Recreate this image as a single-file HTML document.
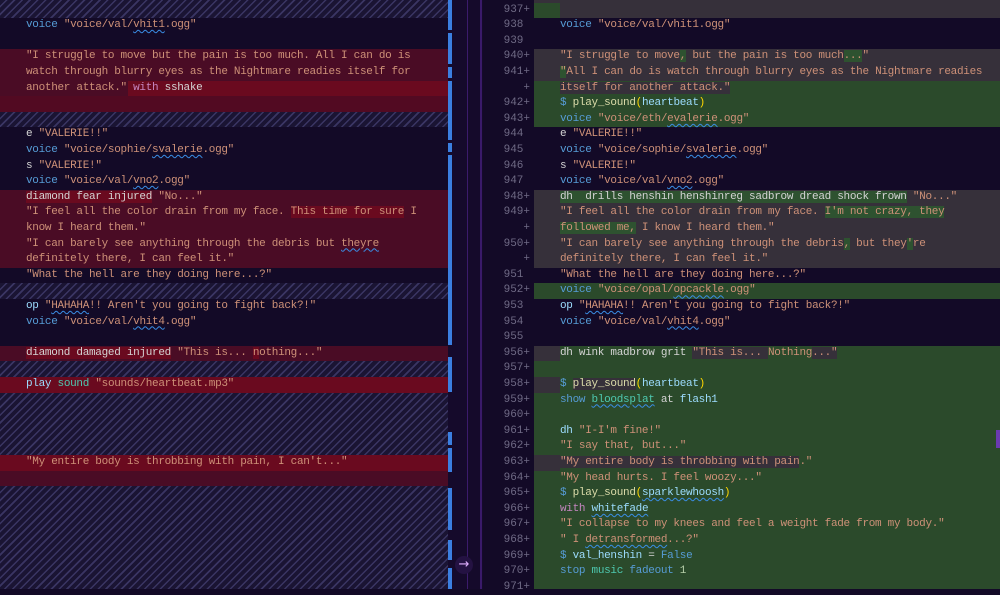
<!DOCTYPE html>
<html><head><meta charset="utf-8"><style>
*{margin:0;padding:0;box-sizing:border-box}
body{width:1000px;height:589px;overflow:hidden;background:#130a27;font-family:"Liberation Mono",monospace;font-size:11px;letter-spacing:-0.3px;position:relative}
.r{position:absolute;height:15.6px;line-height:15.6px;white-space:pre;color:#ce9178}
.L{left:0;width:448px}
.R{left:534px;width:466px}
.t{position:absolute;left:26px;top:0}
.R .t{left:26px}
.h{position:absolute;left:0;width:448px;background:#1a1433 repeating-linear-gradient(135deg,#1a1433 0 4px,#3a3563 4px 5.5px)}
.red{background:#4a0c25}
.red2{background:#6a0a1f}
.g{background:#2b4a2b}
.m{background:#36303a}
.gs{background:#2e5230}
.k{color:#569cd6}.w{color:#d4d4d4}.p{color:#c586c0}.y{color:#dcdcaa}.b{color:#ffd700}.c{color:#9cdcfe}.tq{color:#4ec9b0}.n{color:#b5cea8}
.u{text-decoration:underline wavy #3a8ee6;text-decoration-thickness:1px;text-underline-offset:2px}
.ln{position:absolute;left:483px;width:51px;height:15.6px;line-height:15.6px;text-align:right;color:#6f6a85;padding-right:4px;white-space:pre;letter-spacing:0}
.gap{position:absolute;left:448px;width:4px;height:3px;background:#150a2b}
</style></head><body>
<div class="h" style="top:0;height:18.2px"></div>
<div class="h" style="top:111.8px;height:15.6px"></div>
<div class="h" style="top:283.4px;height:15.6px"></div>
<div class="h" style="top:361.4px;height:15.6px"></div>
<div class="h" style="top:392.6px;height:62.4px"></div>
<div class="h" style="top:486.2px;height:103px"></div>
<div class="r L" style="top:18.2px"><span class="t"><span class="k">voice</span> "voice/val/<span class="u">vhit1</span>.ogg"</span></div>
<div class="r L red" style="top:49.4px"><span class="t">"I struggle to move but the pain is too much. All I can do is</span></div>
<div class="r L red" style="top:65px"><span class="t">watch through blurry eyes as the Nightmare readies itself for</span></div>
<div class="r L red" style="top:80.6px"><div style="position:absolute;left:128px;right:0;top:0;bottom:0" class="red2"></div><span class="t">another attack." <span class="p">with</span> <span class="w">sshake</span></span></div>
<div class="r L red2" style="top:96.2px;background:#520a22"></div>
<div class="r L" style="top:127.4px"><span class="t"><span class="w">e</span> "VALERIE!!"</span></div>
<div class="r L" style="top:143px"><span class="t"><span class="k">voice</span> "voice/sophie/<span class="u">svalerie</span>.ogg"</span></div>
<div class="r L" style="top:158.6px"><span class="t"><span class="w">s</span> "VALERIE!"</span></div>
<div class="r L" style="top:174.2px"><span class="t"><span class="k">voice</span> "voice/val/<span class="u">vno2</span>.ogg"</span></div>
<div class="r L red" style="top:189.8px"><span class="t"><span class="w red2">diamond fear injured</span> "No..."</span></div>
<div class="r L red" style="top:205.4px"><span class="t">"I feel all the color drain from my face. <span class="red2">This time for sure</span> I</span></div>
<div class="r L red" style="top:221px"><span class="t">know I heard them."</span></div>
<div class="r L red" style="top:236.6px"><span class="t">"I can barely see anything through the debris but <span class="u">theyre</span></span></div>
<div class="r L red" style="top:252.2px"><span class="t">definitely there, I can feel it."</span></div>
<div class="r L" style="top:267.8px"><span class="t">"What the hell are they doing here...?"</span></div>
<div class="r L" style="top:299px"><span class="t"><span class="c">op</span> "<span class="u">HAHAHA</span>!! Aren't you going to fight back?!"</span></div>
<div class="r L" style="top:314.6px"><span class="t"><span class="k">voice</span> "voice/val/<span class="u">vhit4</span>.ogg"</span></div>
<div class="r L red" style="top:345.8px"><span class="t"><span class="w red2">diamond damaged injured</span> "This is... <span class="red2">n</span>othing..."</span></div>
<div class="r L red2" style="top:377px"><span class="t"><span class="c">play</span> <span class="tq">sound</span> "sounds/heartbeat.mp3"</span></div>
<div class="r L red2" style="top:455px"><span class="t">"My entire body is throbbing with pain, I can't..."</span></div>
<div class="r L red" style="top:470.6px"></div>
<div style="position:absolute;left:448px;top:0;width:4px;height:589px;background:#3b7fe0"></div>
<div class="gap" style="top:30px"></div><div class="gap" style="top:64px"></div><div class="gap" style="top:78px"></div><div class="gap" style="top:140px"></div><div class="gap" style="top:152px"></div><div class="gap" style="top:345px;height:12px"></div><div class="gap" style="top:392px;height:40px"></div><div class="gap" style="top:445px"></div><div class="gap" style="top:472px;height:16px"></div><div class="gap" style="top:530px;height:10px"></div><div class="gap" style="top:560px;height:8px"></div>
<div style="position:absolute;left:452px;top:0;width:31px;height:589px;background:#150a2b"></div>
<div style="position:absolute;left:467px;top:0;width:1px;height:589px;background:#3b1b6b"></div>
<div style="position:absolute;left:480px;top:0;width:2px;height:589px;background:#3a1a6a"></div>
<div style="position:absolute;left:455px;top:556px;width:18px;height:18px;border-radius:9px;background:#241242;color:#e0b0ff;font-size:13px;line-height:18px;text-align:center;font-family:'DejaVu Sans',sans-serif;letter-spacing:0">→</div>
<div class="r R m" style="top:-13px"></div>
<div class="r R m" style="top:2.6px"><div class="g" style="position:absolute;left:0;width:26px;height:15.6px"></div></div>
<div class="r R m" style="top:49.4px"></div>
<div class="r R m" style="top:65px"></div>
<div class="r R g" style="top:80.6px"></div>
<div class="r R g" style="top:96.2px"></div>
<div class="r R g" style="top:111.8px"></div>
<div class="r R m" style="top:189.8px"></div>
<div class="r R m" style="top:205.4px"></div>
<div class="r R m" style="top:221px"></div>
<div class="r R m" style="top:236.6px"></div>
<div class="r R m" style="top:252.2px"></div>
<div class="r R g" style="top:283.4px"></div>
<div class="g" style="position:absolute;left:534px;top:345.8px;width:466px;height:243.2px"></div>
<div class="m" style="position:absolute;left:534px;top:345.8px;width:26px;height:15.6px"></div>
<div class="m" style="position:absolute;left:534px;top:377px;width:26px;height:15.6px"></div>
<div class="m" style="position:absolute;left:534px;top:455px;width:26px;height:15.6px"></div>
<div class="ln" style="top:2.6px">937+</div>
<div class="ln" style="top:18.2px">938 </div>
<div class="ln" style="top:33.8px">939 </div>
<div class="ln" style="top:49.4px">940+</div>
<div class="ln" style="top:65px">941+</div>
<div class="ln" style="top:80.6px">+</div>
<div class="ln" style="top:96.2px">942+</div>
<div class="ln" style="top:111.8px">943+</div>
<div class="ln" style="top:127.4px">944 </div>
<div class="ln" style="top:143px">945 </div>
<div class="ln" style="top:158.6px">946 </div>
<div class="ln" style="top:174.2px">947 </div>
<div class="ln" style="top:189.8px">948+</div>
<div class="ln" style="top:205.4px">949+</div>
<div class="ln" style="top:221px">+</div>
<div class="ln" style="top:236.6px">950+</div>
<div class="ln" style="top:252.2px">+</div>
<div class="ln" style="top:267.8px">951 </div>
<div class="ln" style="top:283.4px">952+</div>
<div class="ln" style="top:299px">953 </div>
<div class="ln" style="top:314.6px">954 </div>
<div class="ln" style="top:330.2px">955 </div>
<div class="ln" style="top:345.8px">956+</div>
<div class="ln" style="top:361.4px">957+</div>
<div class="ln" style="top:377px">958+</div>
<div class="ln" style="top:392.6px">959+</div>
<div class="ln" style="top:408.2px">960+</div>
<div class="ln" style="top:423.8px">961+</div>
<div class="ln" style="top:439.4px">962+</div>
<div class="ln" style="top:455px">963+</div>
<div class="ln" style="top:470.6px">964+</div>
<div class="ln" style="top:486.2px">965+</div>
<div class="ln" style="top:501.8px">966+</div>
<div class="ln" style="top:517.4px">967+</div>
<div class="ln" style="top:533px">968+</div>
<div class="ln" style="top:548.6px">969+</div>
<div class="ln" style="top:564.2px">970+</div>
<div class="ln" style="top:579.8px">971+</div>
<div class="r R" style="top:18.2px"><span class="t"><span class="k">voice</span> "voice/val/vhit1.ogg"</span></div>
<div class="r R" style="top:49.4px"><span class="t">"I struggle to move<span class="gs">,</span> but the pain is too much<span class="gs">...</span>"</span></div>
<div class="r R" style="top:65px"><span class="t"><span class="gs">"</span>All I can do is watch through blurry eyes as the Nightmare readies</span></div>
<div class="r R" style="top:80.6px"><span class="t"><span class="m">itself for another attack."</span></span></div>
<div class="r R" style="top:96.2px"><span class="t"><span class="k">$</span> <span class="y">play_sound</span><span class="b">(</span><span class="c">heartbeat</span><span class="b">)</span></span></div>
<div class="r R" style="top:111.8px"><span class="t"><span class="k">voice</span> "voice/eth/<span class="u">evalerie</span>.ogg"</span></div>
<div class="r R" style="top:127.4px"><span class="t"><span class="w">e</span> "VALERIE!!"</span></div>
<div class="r R" style="top:143px"><span class="t"><span class="k">voice</span> "voice/sophie/<span class="u">svalerie</span>.ogg"</span></div>
<div class="r R" style="top:158.6px"><span class="t"><span class="w">s</span> "VALERIE!"</span></div>
<div class="r R" style="top:174.2px"><span class="t"><span class="k">voice</span> "voice/val/<span class="u">vno2</span>.ogg"</span></div>
<div class="r R" style="top:189.8px"><span class="t"><span class="w gs">dh  drills henshin henshinreg sadbrow dread shock frown</span> "No..."</span></div>
<div class="r R" style="top:205.4px"><span class="t">"I feel all the color drain from my face. <span class="gs">I'm not crazy, they</span></span></div>
<div class="r R" style="top:221px"><span class="t"><span class="gs">followed me,</span> I know I heard them."</span></div>
<div class="r R" style="top:236.6px"><span class="t">"I can barely see anything through the debris<span class="gs">,</span> but they<span class="gs">'</span>re</span></div>
<div class="r R" style="top:252.2px"><span class="t">definitely there, I can feel it."</span></div>
<div class="r R" style="top:267.8px"><span class="t">"What the hell are they doing here...?"</span></div>
<div class="r R" style="top:283.4px"><span class="t"><span class="k">voice</span> "voice/opal/<span class="u">opcackle</span>.ogg"</span></div>
<div class="r R" style="top:299px"><span class="t"><span class="c">op</span> "<span class="u">HAHAHA</span>!! Aren't you going to fight back?!"</span></div>
<div class="r R" style="top:314.6px"><span class="t"><span class="k">voice</span> "voice/val/<span class="u">vhit4</span>.ogg"</span></div>
<div class="r R" style="top:345.8px"><span class="t"><span class="w">dh wink madbrow grit</span> <span class="m">"This is... </span>Nothing<span class="m">..."</span></span></div>
<div class="r R" style="top:377px"><span class="t"><span class="k">$</span> <span class="y m">play_sound</span><span class="b">(</span><span class="c">heartbeat</span><span class="b">)</span></span></div>
<div class="r R" style="top:392.6px"><span class="t"><span class="k">show</span> <span class="tq u">bloodsplat</span> <span class="w">at</span> <span class="c">flash1</span></span></div>
<div class="r R" style="top:423.8px"><span class="t"><span class="c">dh</span> "I-I'm fine!"</span></div>
<div class="r R" style="top:439.4px"><span class="t">"I say that, but..."</span></div>
<div class="r R" style="top:455px"><span class="t"><span class="m">"My entire body is throbbing with pain</span>."</span></div>
<div class="r R" style="top:470.6px"><span class="t">"My head hurts. I feel woozy..."</span></div>
<div class="r R" style="top:486.2px"><span class="t"><span class="k">$</span> <span class="y">play_sound</span><span class="b">(</span><span class="c u">sparklewhoosh</span><span class="b">)</span></span></div>
<div class="r R" style="top:501.8px"><span class="t"><span class="p">with</span> <span class="c u">whitefade</span></span></div>
<div class="r R" style="top:517.4px"><span class="t">"I collapse to my knees and feel a weight fade from my body."</span></div>
<div class="r R" style="top:533px"><span class="t">" I <span class="u">detransformed</span>...?"</span></div>
<div class="r R" style="top:548.6px"><span class="t"><span class="k">$</span> <span class="c">val_henshin</span> <span class="w">=</span> <span class="k">False</span></span></div>
<div class="r R" style="top:564.2px"><span class="t"><span class="k">stop</span> <span class="tq">music</span> <span class="k">fadeout</span> <span class="n">1</span></span></div>
<div style="position:absolute;left:996px;top:430px;width:4px;height:18px;background:#6a3ab0"></div>
</body></html>
